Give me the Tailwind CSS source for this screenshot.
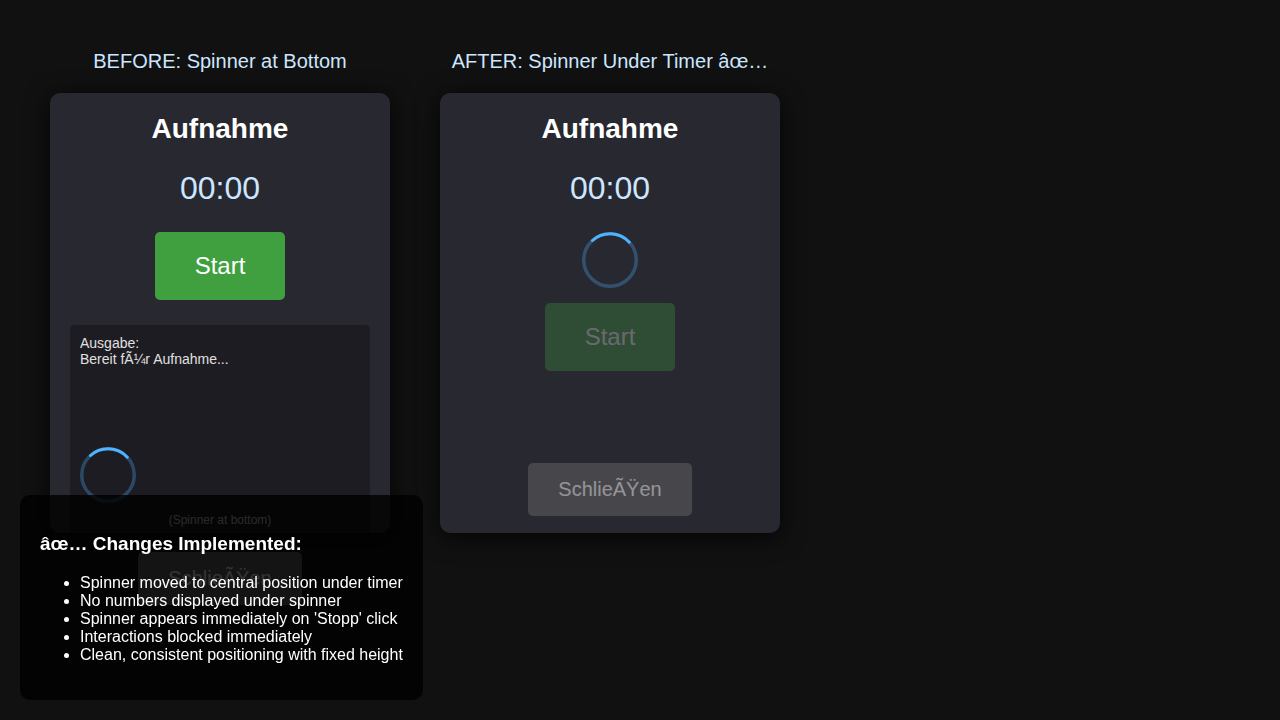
<!DOCTYPE html>
<html lang="de">
<head>
<meta charset="UTF-8">
<meta name="viewport" content="width=device-width, initial-scale=1">
<title>Aufnahme</title>
<script src="https://cdn.jsdelivr.net/npm/@tailwindcss/browser@4"></script>
</head>
<body class="min-h-screen bg-[#111] p-[50px] font-['Liberation_Sans',Arial,sans-serif] text-base text-white">
<main class="flex flex-wrap items-start gap-[50px]">
  <section class="w-[340px]">
    <h2 class="mb-5 text-center text-xl leading-[23px] text-[#cce6ff]">BEFORE: Spinner at Bottom</h2>
    <div class="flex h-[440px] flex-col items-center rounded-[10px] bg-[#282830] p-5 shadow-[0_4px_24px_#000c]">
      <h1 class="text-[28px] leading-8 font-bold">Aufnahme</h1>
      <div class="mt-[25px] text-[32px] leading-[37px] text-[#cce6ff]">00:00</div>
      <button type="button" class="mt-[25px] shrink-0 rounded-[5px] bg-[#40a040] px-10 py-5 text-2xl leading-7">Start</button>
      <div class="mt-[25px] flex h-[212px] w-full shrink-0 flex-col rounded-[4px] bg-[#0a0508]/35 p-[10px] text-sm leading-4 text-[#e0e0e0]">
        <p>Ausgabe:<br>Bereit fÃ¼r Aufnahme...</p>
        <svg class="mt-auto size-14" viewBox="0 0 56 56" fill="none" stroke="#4db4ff" stroke-width="3.5" role="status" aria-label="Spinner">
          <circle cx="28" cy="28" r="26.25" stroke-opacity=".3"/>
          <path d="M10.5 8.5A26.25 26.25 0 0 1 47.3 10.2" stroke-linecap="round" stroke-width="3"/>
        </svg>
        <p class="mt-[10px] text-center text-xs leading-[14px] text-[#ccc]">(Spinner at bottom)</p>
      </div>
      <button type="button" class="mt-[15px] shrink-0 rounded-[5px] bg-[#666] px-[30px] py-[15px] text-xl leading-[23px]">SchlieÃŸen</button>
    </div>
  </section>
  <section class="w-[340px]">
    <h2 class="mb-5 text-center text-xl leading-[23px] whitespace-nowrap text-[#cce6ff]">AFTER: Spinner Under Timer âœ…</h2>
    <div class="flex h-[440px] flex-col items-center rounded-[10px] bg-[#282830] px-5 pt-5 pb-[17px] shadow-[0_4px_24px_#000c]">
      <h1 class="text-[28px] leading-8 font-bold">Aufnahme</h1>
      <div class="mt-[25px] text-[32px] leading-[37px] text-[#cce6ff]">00:00</div>
      <svg class="mt-[25px] size-14" viewBox="0 0 56 56" fill="none" stroke="#4db4ff" stroke-width="3.5" role="status" aria-label="Spinner">
        <circle cx="28" cy="28" r="26.25" stroke-opacity=".3"/>
        <path d="M10.5 8.5A26.25 26.25 0 0 1 47.3 10.2" stroke-linecap="round" stroke-width="3"/>
      </svg>
      <button type="button" disabled class="mt-[15px] rounded-[5px] bg-[#40a040] px-10 py-5 text-2xl leading-7 opacity-30">Start</button>
      <button type="button" disabled class="mt-auto rounded-[5px] bg-[#666] px-[30px] py-[15px] text-xl leading-[23px] opacity-50">SchlieÃŸen</button>
    </div>
  </section>
</main>
<aside class="fixed bottom-5 left-5 rounded-[10px] bg-black/80 p-5">
  <h3 class="mt-[18px] mb-5 text-[19px] leading-[21px] font-bold">âœ… Changes Implemented:</h3>
  <ul class="mb-4 list-disc pl-10 leading-[18px]">
    <li>Spinner moved to central position under timer</li>
    <li>No numbers displayed under spinner</li>
    <li>Spinner appears immediately on 'Stopp' click</li>
    <li>Interactions blocked immediately</li>
    <li>Clean, consistent positioning with fixed height</li>
  </ul>
</aside>
</body>
</html>
